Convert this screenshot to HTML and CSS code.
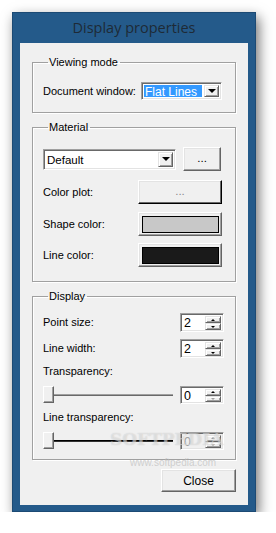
FILE: index.html
```html
<!DOCTYPE html>
<html lang="en">
<head>
    <meta charset="UTF-8">
    <title>Display properties</title>
    <link rel="stylesheet" href="styles.css">
</head>
<body>
    <div class="window">
        <div class="titlebar">Display properties</div>
        <div class="client">
            <fieldset class="group group-view">
                <legend>Viewing mode</legend>
                <div class="row row-first">
                    <span class="label">Document window:</span>
                    <div class="combo combo-mode">
                        <span class="combo-text selected">Flat Lines</span>
                        <span class="drop"><i class="arrow-down"></i></span>
                    </div>
                </div>
            </fieldset>

            <fieldset class="group group-material">
                <legend>Material</legend>
                <div class="row row-first">
                    <div class="combo combo-material">
                        <span class="combo-text">Default</span>
                        <span class="drop"><i class="arrow-down"></i></span>
                    </div>
                    <button class="btn btn-more">...</button>
                </div>
                <div class="row row-color">
                    <span class="label">Color plot:</span>
                    <button class="btn btn-wide btn-default">...</button>
                </div>
                <div class="row row-color">
                    <span class="label">Shape color:</span>
                    <button class="btn btn-wide btn-swatch"><span class="swatch" style="background:#c8c8c8"></span></button>
                </div>
                <div class="row row-color row-last">
                    <span class="label">Line color:</span>
                    <button class="btn btn-wide btn-swatch"><span class="swatch" style="background:#1a1a1a"></span></button>
                </div>
            </fieldset>

            <fieldset class="group group-display">
                <legend>Display</legend>
                <div class="row row-spin row-first">
                    <span class="label">Point size:</span>
                    <div class="spin">
                        <span class="spin-value">2</span>
                        <span class="spin-btns"><span class="spin-btn"><i class="tri-up"></i></span><span class="spin-btn"><i class="tri-down"></i></span></span>
                    </div>
                </div>
                <div class="row row-spin row-next">
                    <span class="label">Line width:</span>
                    <div class="spin">
                        <span class="spin-value">2</span>
                        <span class="spin-btns"><span class="spin-btn"><i class="tri-up"></i></span><span class="spin-btn"><i class="tri-down"></i></span></span>
                    </div>
                </div>
                <div class="caption">Transparency:</div>
                <div class="row row-slider">
                    <div class="slider">
                        <span class="track"></span>
                        <span class="thumb"></span>
                    </div>
                    <div class="spin spin-short">
                        <span class="spin-value">0</span>
                        <span class="spin-btns"><span class="spin-btn"><i class="tri-up"></i></span><span class="spin-btn"><i class="tri-down light"></i></span></span>
                    </div>
                </div>
                <div class="caption">Line transparency:</div>
                <div class="row row-slider">
                    <div class="slider">
                        <span class="track dark"></span>
                        <span class="thumb"></span>
                    </div>
                    <div class="spin spin-short disabled">
                        <span class="spin-value">0</span>
                        <span class="spin-btns"><span class="spin-btn"><i class="tri-up"></i></span><span class="spin-btn"><i class="tri-down"></i></span></span>
                    </div>
                </div>
            </fieldset>

            <div class="footer">
                <button class="btn btn-close">Close</button>
            </div>

            <div class="watermark">SOFTPEDIA</div>
            <div class="watermark-url">www.softpedia.com</div>
        </div>
    </div>
</body>
</html>
```

FILE: styles.css
```css
body {
    margin: 0;
    background-color: #ffffff;
    font-family: 'Liberation Sans', Arial, sans-serif;
    font-size: 11px;
    color: #000;
}
.window {
    margin: 12px 0 0 12px;
    width: 244px;
    height: 500px;
    box-sizing: border-box;
    padding: 0 7px 7px 7px;
    background-color: #245a8a;
    border: 1px solid #1c4a74;
    box-shadow: 3px 5px 12px rgba(0, 0, 0, 0.55);
}
.titlebar {
    height: 30px;
    line-height: 29px;
    text-align: center;
    font-family: 'Open Sans', sans-serif;
    font-size: 14.5px;
    color: #1e2a36;
}
.client {
    position: relative;
    height: 462px;
    box-sizing: border-box;
    padding: 13px 12px 13px 12px;
    background-color: #f0f0f0;
}
.group {
    margin: 0;
    padding: 0 13px 0 10px;
    border: 1px solid #a0a0a0;
    box-shadow: 1px 1px 0 #fff, inset 1px 1px 0 #fff;
    min-width: 0;
}
.group + .group {
    margin-top: 8px;
}
.group legend {
    margin-left: 5px;
    padding: 0 2px 0 1px;
    line-height: 13px;
}
.group-view {
    padding-bottom: 12px;
}
.group-material {
    padding-bottom: 14px;
}
.group-display {
    padding-bottom: 9px;
}
.row {
    display: flex;
    align-items: center;
}
.row-first {
    margin-top: 13px;
}
.group-display .row-first {
    margin-top: 10px;
}
.label {
    flex: 1;
    line-height: 13px;
}

/* combo boxes */
.combo {
    display: flex;
    align-items: stretch;
    box-sizing: border-box;
    background: #fff;
    border: 1px solid;
    border-color: #a0a0a0 #fff #fff #a0a0a0;
    box-shadow: inset 1px 1px 0 #696969, inset -1px -1px 0 #e3e3e3;
    padding: 2px;
}
.combo-mode {
    width: 81px;
    height: 18px;
    margin-left: 5px;
}
.combo-material {
    width: 134px;
    height: 21px;
    padding: 2px 2px 2px 2px;
}
.combo-text {
    flex: 1;
    line-height: 14px;
    padding-left: 1px;
    font-size: 11.5px;
}
.combo-material .combo-text {
    line-height: 16px;
}
.combo-text.selected {
    background-color: #3399ff;
    color: #fff;
    margin-right: 2px;
    font-size: 12px;
}
.drop {
    width: 15px;
    display: flex;
    align-items: center;
    justify-content: center;
    box-sizing: border-box;
    background: #f0f0f0;
    border: 1px solid;
    border-color: #e3e3e3 #646464 #646464 #e3e3e3;
    box-shadow: inset 1px 1px 0 #fff, inset -1px -1px 0 #a0a0a0;
}
.arrow-down {
    width: 0;
    height: 0;
    border-left: 4px solid transparent;
    border-right: 4px solid transparent;
    border-top: 4px solid #000;
}

/* push buttons */
.btn {
    box-sizing: border-box;
    margin: 0;
    padding: 0;
    font-family: inherit;
    font-size: 11.5px;
    color: #000;
    background-color: #f0f0f0;
    border: 1px solid;
    border-color: #fff #646464 #646464 #fff;
    box-shadow: inset -1px -1px 0 #a0a0a0, inset 1px 1px 0 #e3e3e3;
}
.btn-more {
    width: 38px;
    height: 24px;
    margin-left: 7px;
    margin-right: 1px;
    padding-bottom: 3px;
}
.row-color {
    margin-top: 8px;
}
.row-color:nth-child(3) {
    margin-top: 9px;
}
.row-last {
    margin-top: 7px;
}
.btn-wide {
    width: 84px;
    height: 24px;
}
.btn-default {
    border-color: #fff #000 #000 #fff;
    box-shadow: inset -1px -1px 0 #696969, inset 1px 1px 0 #e3e3e3;
    color: #8a8a8a;
    padding-bottom: 3px;
}
.btn-swatch {
    padding: 3px 2px 2px 3px;
    display: flex;
}
.swatch {
    flex: 1;
    border: 1px solid #000;
}

/* spin boxes */
.row-next {
    margin-top: 7px;
}
.spin {
    display: flex;
    box-sizing: border-box;
    width: 44px;
    height: 19px;
    margin-right: -2px;
    background: #fff;
    border: 1px solid;
    border-color: #a0a0a0 #fff #fff #a0a0a0;
    box-shadow: inset 1px 1px 0 #696969, inset -1px -1px 0 #e3e3e3;
    padding: 2px 2px 1px 2px;
}
.spin-short {
    height: 18px;
}
.spin-value {
    flex: 1;
    padding-left: 1px;
    font-size: 12.5px;
    line-height: 14px;
}
.spin-btns {
    width: 16px;
    display: flex;
    flex-direction: column;
}
.spin-btn {
    flex: 1;
    display: flex;
    align-items: center;
    justify-content: center;
    background: #f0f0f0;
    border: 1px solid;
    border-color: #e3e3e3 #646464 #646464 #e3e3e3;
    box-shadow: inset 1px 1px 0 #fff, inset -1px -1px 0 #a0a0a0;
}
.tri-up, .tri-down {
    width: 0;
    height: 0;
    border-left: 2px solid transparent;
    border-right: 2px solid transparent;
}
.tri-up {
    border-bottom: 2px solid #000;
}
.tri-down {
    border-top: 2px solid #000;
}
.tri-down.light {
    border-top-color: #a0a0a0;
}
.spin.disabled {
    background: #f0f0f0;
}
.spin.disabled .spin-value {
    color: #a0a0a0;
}
.spin.disabled .tri-up {
    border-bottom-color: #a0a0a0;
}
.spin.disabled .tri-down {
    border-top-color: #a0a0a0;
}

/* sliders */
.caption {
    margin-top: 7px;
    line-height: 13px;
}
.row-slider {
    margin-top: 8px;
}
.slider {
    position: relative;
    flex: 1;
    height: 18px;
    margin-right: 7px;
    display: flex;
    align-items: center;
}
.track {
    flex: 1;
    height: 0;
    border-top: 1px solid #a0a0a0;
    border-bottom: 1px solid #696969;
}
.track.dark {
    border-top-color: #000;
    border-bottom-color: #333;
}
.thumb {
    position: absolute;
    left: 0;
    top: 0;
    width: 11px;
    height: 17px;
    box-sizing: border-box;
    background: #f0f0f0;
    border: 1px solid;
    border-color: #fff #646464 #646464 #fff;
    box-shadow: inset -1px -1px 0 #a0a0a0;
}

/* footer */
.footer {
    display: flex;
    justify-content: flex-end;
    margin-top: 9px;
}
.btn-close {
    width: 75px;
    height: 23px;
    font-size: 12px;
}

/* watermark overlay */
.watermark {
    position: absolute;
    left: 90px;
    top: 386px;
    font-family: 'DejaVu Serif', serif;
    font-weight: bold;
    font-size: 17px;
    color: rgba(255, 255, 255, 0.4);
    text-shadow: 0 0 1px rgba(150, 150, 150, 0.45);
}
.watermark-url {
    position: absolute;
    left: 110px;
    top: 414px;
    font-size: 10px;
    color: rgba(190, 190, 190, 0.7);
}
```
